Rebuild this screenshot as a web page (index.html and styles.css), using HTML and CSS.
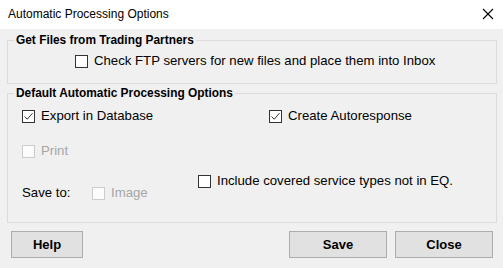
FILE: index.html
```html
<!DOCTYPE html>
<html>
<head>
<meta charset="utf-8">
<link rel="stylesheet" href="styles.css">
</head>
<body>
<div class="window">
  <div class="titlebar">
    <span class="title">Automatic Processing Options</span>
    <svg class="close-x" width="12" height="12" viewBox="0 0 12 12"><path d="M1 1 L11 11 M11 1 L1 11" stroke="#000" stroke-width="1.1" fill="none"/></svg>
  </div>
  <div class="client">
    <fieldset class="group group1">
      <legend>Get Files from Trading Partners</legend>
      <div class="row ftp-row">
        <label class="cb"><span class="box"></span><span class="lbl">Check FTP servers for new files and place them into Inbox</span></label>
      </div>
    </fieldset>
    <fieldset class="group group2">
      <legend>Default Automatic Processing Options</legend>
      <div class="row row1">
        <label class="cb export"><span class="box checked"><svg width="11" height="11" viewBox="0 0 11 11"><path d="M1.5 5.5 L4.2 8.2 L9.5 2.2" stroke="#333" stroke-width="1" fill="none"/></svg></span><span class="lbl">Export in Database</span></label>
        <label class="cb"><span class="box checked"><svg width="11" height="11" viewBox="0 0 11 11"><path d="M1.5 5.5 L4.2 8.2 L9.5 2.2" stroke="#333" stroke-width="1" fill="none"/></svg></span><span class="lbl">Create Autoresponse</span></label>
      </div>
      <div class="row row2">
        <label class="cb disabled"><span class="box"></span><span class="lbl">Print</span></label>
      </div>
      <div class="row row3">
        <div class="saveto">
          <span class="saveto-lbl">Save to:</span>
          <label class="cb disabled"><span class="box"></span><span class="lbl">Image</span></label>
        </div>
        <label class="cb"><span class="box"></span><span class="lbl">Include covered service types not in EQ.</span></label>
      </div>
    </fieldset>
    <div class="buttons">
      <button class="btn help">Help</button>
      <span class="spacer"></span>
      <button class="btn save">Save</button>
      <button class="btn close">Close</button>
    </div>
  </div>
</div>
</body>
</html>
```
FILE: styles.css
```css
* { box-sizing: border-box; }
html, body { margin: 0; padding: 0; }
body {
  width: 503px;
  height: 268px;
  overflow: hidden;
  font-family: "Liberation Sans", Arial, sans-serif;
  font-size: 13.2px;
  color: #000;
  background: #f0f0f0;
}
.window { width: 503px; height: 268px; display: flex; flex-direction: column; }
.titlebar {
  height: 29px;
  background: #fff;
  display: flex;
  align-items: center;
  padding: 0 9px 0 8px;
  flex: none;
}
.title {
  font-family: "Liberation Sans", Arial, sans-serif;
  font-size: 12px;
  flex: 1;
  padding-bottom: 1px;
}
.close-x { display: block; margin-top: -1px; }
.client { flex: 1; background: #f0f0f0; padding-top: 4px; }

.group {
  margin: 0 6px 0 7px;
  border: 1px solid #dcdcdc;
  padding: 0;
  min-width: 0;
}
.group legend {
  font-weight: bold;
  font-size: 11.9px;
  line-height: 14px;
  padding: 0 2px;
  margin-left: 6px;
}
.group1 { padding-bottom: 14px; }
.group2 { margin-top: 2px; padding-bottom: 21px; }

.row { display: flex; align-items: center; }
.ftp-row { padding-top: 6px; padding-left: 67px; }
.row1 { padding-top: 8px; padding-left: 14px; }
.row2 { margin-top: 19px; padding-left: 14px; }
.row3 { margin-top: 14px; padding-left: 14px; align-items: flex-start; }

.cb { display: flex; align-items: center; height: 16px; line-height: 16px; }
.box {
  width: 13px;
  height: 13px;
  border: 1px solid #333;
  background: #fff;
  margin-right: 6px;
  display: flex;
  align-items: center;
  justify-content: center;
  flex: none;
}
.box svg { display: block; }
.cb.disabled .box { border-color: #cccccc; background: #fcfcfc; }
.cb.disabled .lbl { color: #a6a6a6; }

.export { width: 247px; flex: none; }
.saveto { display: flex; align-items: center; margin-top: 12px; width: 176px; flex: none; }
.saveto-lbl { width: 70px; line-height: 16px; }

.buttons {
  display: flex;
  margin-top: 8px;
  padding: 0 10px 0 11px;
  gap: 8px;
}
.spacer { flex: 1; }
.btn {
  height: 27px;
  background: #e1e1e1;
  border: 1px solid #adadad;
  border-radius: 0;
  font-family: "Liberation Sans", Arial, sans-serif;
  font-weight: bold;
  font-size: 13px;
  color: #000;
  padding: 0;
}
.help { width: 72px; }
.save, .close { width: 98px; }
```
